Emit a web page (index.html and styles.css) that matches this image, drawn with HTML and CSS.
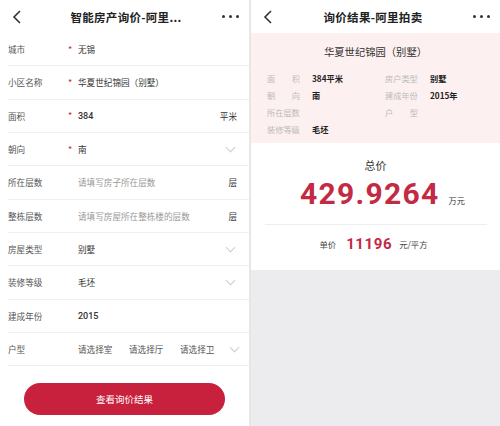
FILE: index.html
```html
<!DOCTYPE html>
<html lang="zh">
<head>
<meta charset="utf-8">
<link rel="stylesheet" href="styles.css">
</head>
<body>
<div class="screens">
  <section class="panel left">
    <header class="nav">
      <svg class="back" width="10" height="14" viewBox="0 0 10 14"><path d="M8 1 L2 7 L8 13" fill="none" stroke="#333" stroke-width="1.6"/></svg>
      <div class="title">智能房产询价-阿里...</div>
      <div class="dots"><i></i><i></i><i></i></div>
    </header>
    <div class="form">
      <div class="row"><span class="label">城市</span><span class="star">*</span><span class="val">无锡</span></div>
      <div class="row"><span class="label">小区名称</span><span class="star">*</span><span class="val">华夏世纪锦园（别墅）</span></div>
      <div class="row"><span class="label">面积</span><span class="star">*</span><span class="val num">384</span><span class="unit">平米</span></div>
      <div class="row"><span class="label">朝向</span><span class="star">*</span><span class="val">南</span><span class="chev"></span></div>
      <div class="row"><span class="label">所在层数</span><span class="val ph">请填写房子所在层数</span><span class="unit">层</span></div>
      <div class="row"><span class="label">整栋层数</span><span class="val ph">请填写房屋所在整栋楼的层数</span><span class="unit">层</span></div>
      <div class="row"><span class="label">房屋类型</span><span class="val">别墅</span><span class="chev"></span></div>
      <div class="row"><span class="label">装修等级</span><span class="val">毛坯</span><span class="chev"></span></div>
      <div class="row"><span class="label">建成年份</span><span class="val num">2015</span></div>
      <div class="row"><span class="label">户型</span><span class="val opts"><span>请选择室</span><span>请选择厅</span><span>请选择卫</span></span><span class="chev"></span></div>
    </div>
    <div class="btn-wrap"><button class="btn">查看询价结果</button></div>
  </section>
  <div class="sep"></div>
  <section class="panel right">
    <header class="nav">
      <svg class="back" width="10" height="14" viewBox="0 0 10 14"><path d="M8 1 L2 7 L8 13" fill="none" stroke="#333" stroke-width="1.6"/></svg>
      <div class="title">询价结果-阿里拍卖</div>
      <div class="dots"><i></i><i></i><i></i></div>
    </header>
    <div class="info">
      <div class="name">华夏世纪锦园（别墅）</div>
      <div class="grid">
        <div class="cell"><span class="k j2"><span>面</span><span>积</span></span><span class="v">384平米</span></div>
        <div class="cell"><span class="k">房户类型</span><span class="v">别墅</span></div>
        <div class="cell"><span class="k j2"><span>朝</span><span>向</span></span><span class="v">南</span></div>
        <div class="cell"><span class="k">建成年份</span><span class="v">2015年</span></div>
        <div class="cell"><span class="k">所在层数</span><span class="v"></span></div>
        <div class="cell"><span class="k j2"><span>户</span><span>型</span></span><span class="v"></span></div>
        <div class="cell"><span class="k">装修等级</span><span class="v">毛坯</span></div>
      </div>
    </div>
    <div class="price">
      <div class="total-label">总价</div>
      <div class="total"><span class="big">429.9264</span><span class="wan">万元</span></div>
      <div class="unit-price"><span class="up-label">单价</span><span class="up-num">11196</span><span class="up-unit">元/平方</span></div>
    </div>
    <div class="rest"></div>
  </section>
</div>
</body>
</html>
```

FILE: styles.css
```css
* { box-sizing: border-box; margin: 0; padding: 0; }
html, body { width: 500px; height: 426px; overflow: hidden; background: #fff; }
body { font-family: "Noto Sans CJK SC", "Noto Sans", sans-serif; color: #333; }
.screens { display: flex; height: 426px; }
.panel { width: 249px; display: flex; flex-direction: column; background: #fff; }
.sep { width: 2px; background: #e6e6e6; }
.nav { height: 33px; display: flex; align-items: center; padding: 0 10px 0 12px; position: relative; }
.back { flex: none; }
.title { flex: 1; text-align: center; font-size: 11.5px; font-weight: 700; color: #222; letter-spacing: 0.3px; }
.left .title { padding-left: 8px; }
.dots { display: flex; gap: 4px; align-items: center; }
.dots i { width: 3px; height: 3px; border-radius: 50%; background: #333; display: block; }
.form { padding-left: 8px; }
.row { height: 33.33px; display: flex; align-items: center; border-bottom: 1px solid #f0f0f0; font-size: 8.6px; padding-right: 12px; }
.label { width: 60px; color: #555; flex: none; }
.star { width: 10px; color: #c8213d; flex: none; font-size: 9px; }
.val { flex: 1; color: #333; padding-left: 10px; }
.star + .val { padding-left: 0; }
.val.num { font-family: "Roboto", sans-serif; font-weight: 500; font-size: 9px; }
.val.ph { color: #999; }
.unit { color: #333; }
.chev { flex: none; width: 7px; height: 7px; border-right: 1px solid #ccc; border-bottom: 1px solid #ccc; transform: rotate(45deg); margin-top: -4px; margin-right: 3px; }
.opts { display: flex; }
.opts span { width: 51px; color: #555; }
.btn-wrap { flex: 1; display: flex; justify-content: center; padding-top: 17px; }
.btn { width: 201px; height: 32px; border-radius: 16px; background: #c8213d; color: #fff; border: none; font-family: inherit; font-size: 9.5px; }
.info { background: #fdf0f0; height: 110px; padding: 8px 0 0 16px; }
.name { text-align: center; font-size: 10.3px; color: #333; height: 22px; line-height: 22px; padding-right: 16px; }
.grid { display: grid; grid-template-columns: 118px 1fr; row-gap: 0; margin-top: 6px; }
.cell { display: flex; height: 17px; align-items: center; font-size: 8.2px; }
.k { width: 45px; color: #bbb; flex: none; }
.k.j2 { display: flex; justify-content: space-between; width: 33px; margin-right: 12px; }
.v { color: #222; font-weight: 700; }
.price { height: 127px; display: flex; flex-direction: column; align-items: center; padding-top: 14px; }
.total-label { font-size: 11px; color: #333; line-height: 16px; }
.total { display: flex; align-items: baseline; margin-top: 4px; }
.big { font-family: "Roboto", sans-serif; font-weight: 700; font-size: 30px; letter-spacing: 1.3px; color: #c32a44; line-height: 34px; margin-left: 14px; }
.wan { font-size: 8.2px; color: #333; margin-left: 9px; }
.unit-price { width: 222px; border-top: 1px solid #eee; margin-top: 13px; display: flex; align-items: center; justify-content: center; padding-top: 10px; padding-right: 4px; }
.up-label { font-size: 8.4px; color: #444; }
.up-num { font-family: "Roboto", sans-serif; font-weight: 700; font-size: 15px; letter-spacing: 0.6px; color: #c32a44; margin: 0 7px 0 10px; }
.up-unit { font-size: 8.4px; color: #444; }
.rest { flex: 1; background: #ececee; }
```
